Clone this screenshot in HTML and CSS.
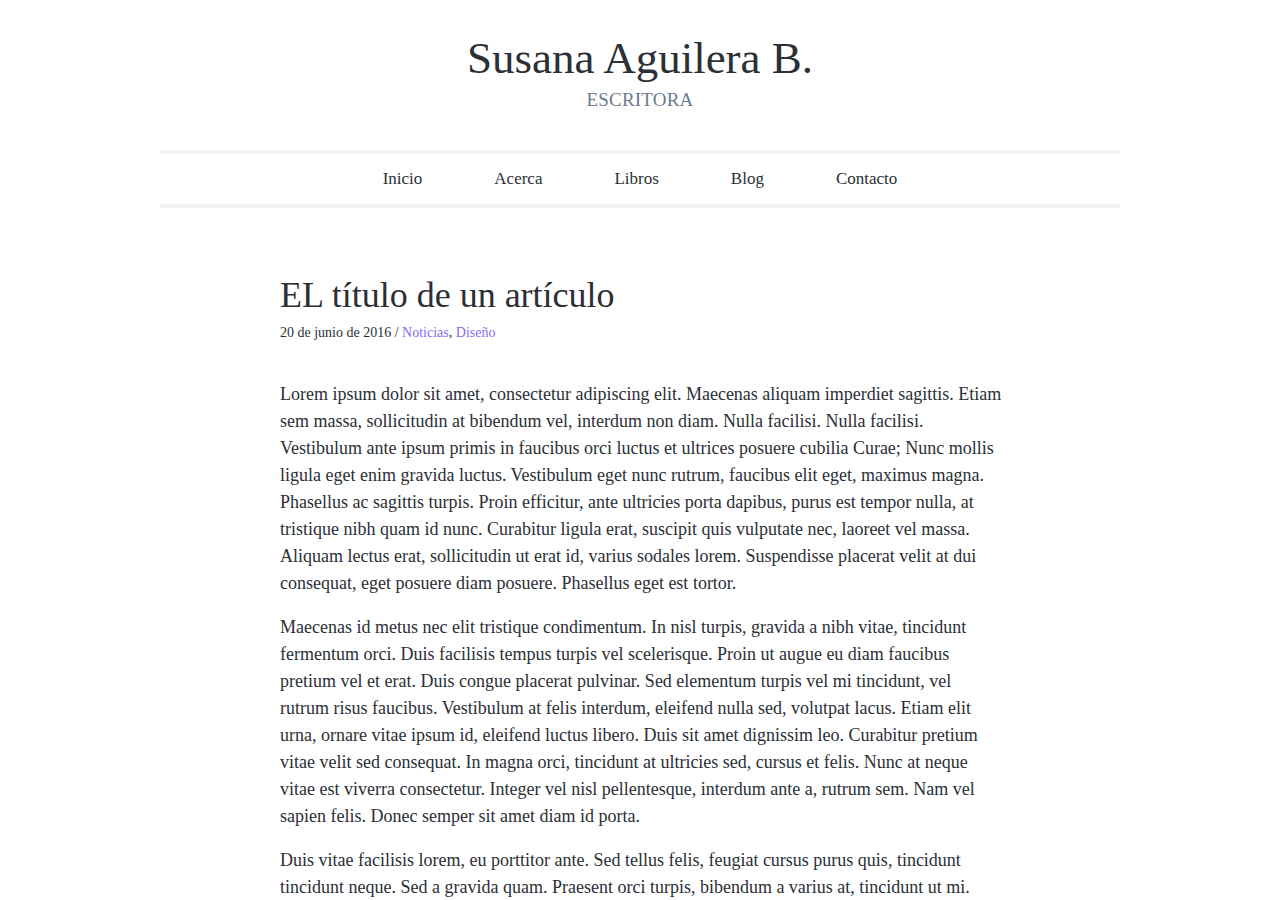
FILE: index.html
```html
<!DOCTYPE html>
<html lang="es">
<head>
<meta charset="utf-8">
<title>Susana Aguilera B. — Escritora</title>
<link rel="stylesheet" href="styles.css">
</head>
<body>
<div class="page">
  <header class="site-header">
    <h1 class="site-title">Susana Aguilera B.</h1>
    <p class="site-tagline">ESCRITORA</p>
  </header>
  <nav class="site-nav">
    <ul class="nav-list">
      <li><a href="#">Inicio</a></li>
      <li><a href="#">Acerca</a></li>
      <li><a href="#">Libros</a></li>
      <li><a href="#">Blog</a></li>
      <li><a href="#">Contacto</a></li>
    </ul>
  </nav>
  <main class="article">
    <h2 class="article-title">EL título de un artículo</h2>
    <p class="article-meta">20 de junio de 2016 <span class="sep">/</span> <a href="#">Noticias</a>, <a href="#">Diseño</a></p>
    <div class="article-body">
      <p>Lorem ipsum dolor sit amet, consectetur adipiscing elit. Maecenas aliquam imperdiet sagittis. Etiam sem massa, sollicitudin at bibendum vel, interdum non diam. Nulla facilisi. Nulla facilisi. Vestibulum ante ipsum primis in faucibus orci luctus et ultrices posuere cubilia Curae; Nunc mollis ligula eget enim gravida luctus. Vestibulum eget nunc rutrum, faucibus elit eget, maximus magna. Phasellus ac sagittis turpis. Proin efficitur, ante ultricies porta dapibus, purus est tempor nulla, at tristique nibh quam id nunc. Curabitur ligula erat, suscipit quis vulputate nec, laoreet vel massa. Aliquam lectus erat, sollicitudin ut erat id, varius sodales lorem. Suspendisse placerat velit at dui consequat, eget posuere diam posuere. Phasellus eget est tortor.</p>
      <p>Maecenas id metus nec elit tristique condimentum. In nisl turpis, gravida a nibh vitae, tincidunt fermentum orci. Duis facilisis tempus turpis vel scelerisque. Proin ut augue eu diam faucibus pretium vel et erat. Duis congue placerat pulvinar. Sed elementum turpis vel mi tincidunt, vel rutrum risus faucibus. Vestibulum at felis interdum, eleifend nulla sed, volutpat lacus. Etiam elit urna, ornare vitae ipsum id, eleifend luctus libero. Duis sit amet dignissim leo. Curabitur pretium vitae velit sed consequat. In magna orci, tincidunt at ultricies sed, cursus et felis. Nunc at neque vitae est viverra consectetur. Integer vel nisl pellentesque, interdum ante a, rutrum sem. Nam vel sapien felis. Donec semper sit amet diam id porta.</p>
      <p>Duis vitae facilisis lorem, eu porttitor ante. Sed tellus felis, feugiat cursus purus quis, tincidunt tincidunt neque. Sed a gravida quam. Praesent orci turpis, bibendum a varius at, tincidunt ut mi. Nulla facilisi. Vivamus mattis, lectus sit amet ultrices aliquet, purus lorem facilisis nisl, vel tempus lectus sem a ex.</p>
    </div>
  </main>
</div>
</body>
</html>
```
FILE: styles.css
```css
html, body {
  margin: 0;
  padding: 0;
  background: #ffffff;
}
body {
  font-family: "Liberation Serif", "Times New Roman", serif;
  color: #2b2f36;
}
.page {
  width: 960px;
  margin: 0 auto;
}
.site-header {
  text-align: center;
  padding-top: 30px;
  padding-bottom: 36px;
}
.site-title {
  margin: 0;
  font-size: 45px;
  font-weight: normal;
  line-height: 56px;
  color: #2b2f36;
}
.site-tagline {
  margin: 0;
  font-size: 19px;
  line-height: 28px;
  color: #6c7a8c;
  letter-spacing: 0.2px;
}
.site-nav {
  border-top: 4px solid #f1f2f3;
  border-bottom: 4px solid #f1f2f3;
}
.nav-list {
  list-style: none;
  margin: 0;
  padding: 0;
  display: flex;
  justify-content: center;
}
.nav-list a {
  display: block;
  padding: 0 36px;
  line-height: 50px;
  font-size: 17px;
  color: #2b2f36;
  text-decoration: none;
}
.article {
  width: 720px;
  margin: 0 auto;
  padding-top: 66px;
}
.article-title {
  margin: 0;
  font-size: 36px;
  font-weight: normal;
  line-height: 42px;
  color: #2b2f36;
}
.article-meta {
  margin: 7px 0 0;
  font-size: 14px;
  line-height: 20px;
  color: #2b2f36;
}
.article-meta a {
  color: #8b6cf6;
  text-decoration: none;
}
.article-body {
  width: 723px;
  padding-top: 38px;
}
.article-body p {
  margin: 0 0 17px;
  font-size: 18px;
  line-height: 27px;
  color: #2b2f36;
}
```
